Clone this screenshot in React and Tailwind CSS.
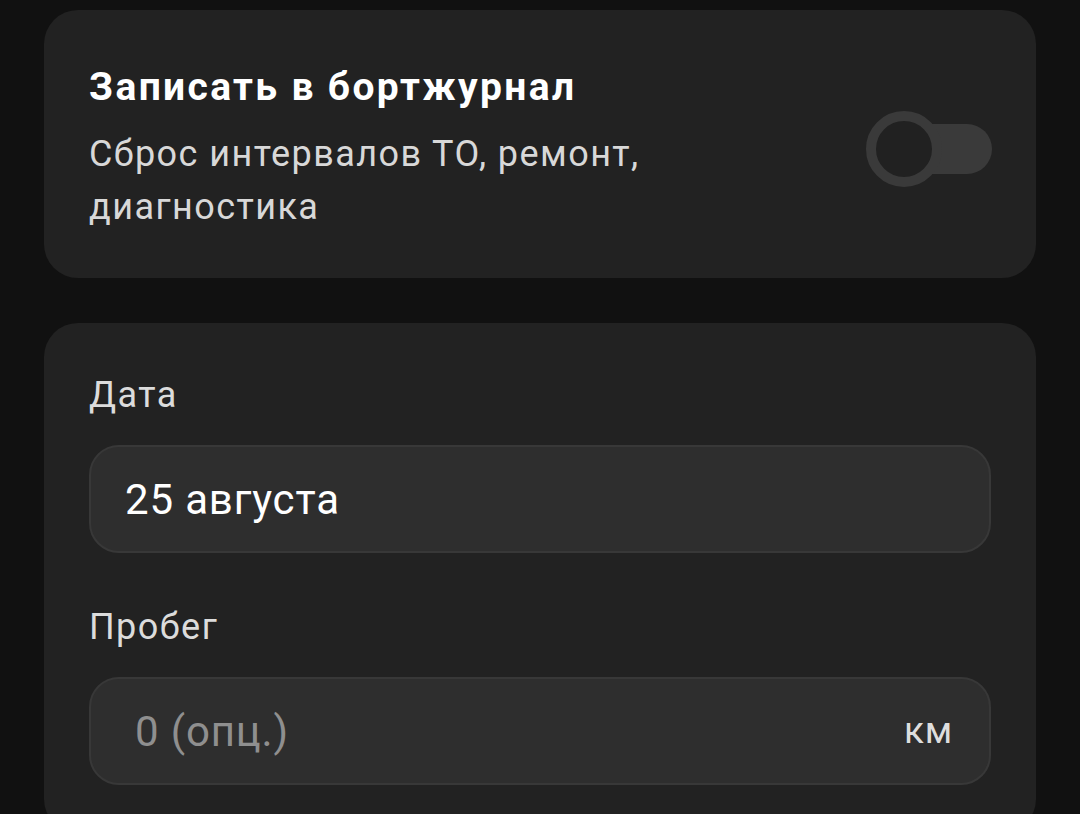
import React, { useState } from 'react';

const Toggle = ({ on, onChange }) => {
    return (
        <button onClick={() => onChange(!on)} className="relative w-[126px] h-[76px] flex items-center shrink-0">
            <div className="absolute right-0 w-[110px] h-[50px] rounded-full bg-[#3a3a3a]"></div>
            <div className="absolute left-0 w-[76px] h-[76px] rounded-full border-[10px] border-[#3a3a3a] bg-[#212121]"></div>
        </button>
    )
}

const Field = ({ label, children, className }) => {
    return (
        <div className={className}>
            <div className="text-[36px] leading-[48px] tracking-[0.04em] text-[#dcdcdc]">{label}</div>
            <div className="mt-[26px] h-[108px] rounded-[30px] bg-[#2e2e2e] border-2 border-[#383838] flex items-center">
                {children}
            </div>
        </div>
    )
}

export default function App() {
    const [logbook, setLogbook] = useState(false)
    return (
        <div className="min-h-screen bg-[#111111] px-[44px] pt-[10px] pb-10 flex flex-col gap-[45px]" style={{ fontFamily: 'Roboto, "Noto Sans", sans-serif' }}>
            <div className="rounded-[34px] bg-[#222222] pl-[45px] pr-[44px] pt-[53px] pb-[44px] flex items-center justify-between">
                <div>
                    <h2 className="text-white text-[39px] leading-[48px] font-bold tracking-[0.06em]">Записать в бортжурнал</h2>
                    <p className="mt-[17px] text-[#d8d8d8] text-[36px] leading-[53px] tracking-[0.04em] w-[620px]">Сброс интервалов ТО, ремонт, диагностика</p>
                </div>
                <Toggle on={logbook} onChange={setLogbook} />
            </div>
            <div className="rounded-[34px] bg-[#222222] px-[45px] pt-[48px] pb-[48px]">
                <Field label="Дата">
                    <span className="pl-[34px] text-white text-[42px] tracking-[0.02em]">25 августа</span>
                </Field>
                <Field label="Пробег" className="mt-[50px]">
                    <span className="pl-[44px] text-[#8f8f8f] text-[42px] tracking-[0.02em] flex-1">0 (опц.)</span>
                    <span className="pr-[36px] text-[#dedede] text-[37px] tracking-[0.02em]">км</span>
                </Field>
            </div>
        </div>
    )
}
